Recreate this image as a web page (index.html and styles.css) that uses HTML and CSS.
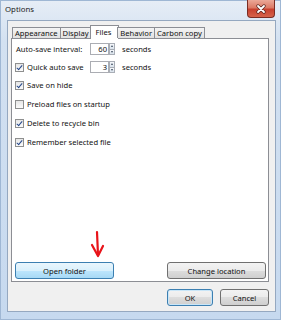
FILE: index.html
```html
<!DOCTYPE html>
<html lang="en">
<head>
  <meta charset="UTF-8" />
  <title>Options</title>
  <link rel="stylesheet" href="styles.css">
</head>
<body>

  <div class="window">
    <!-- Title bar -->
    <div class="titlebar">
      <span class="title">Options</span>
      <div class="close">
        <svg width="12" height="10" viewBox="0 0 12 10">
          <path d="M3 2 L9 8 M9 2 L3 8" stroke="#5a2620" stroke-width="3.2" stroke-linecap="round"/>
          <path d="M3 2 L9 8 M9 2 L3 8" stroke="#fff" stroke-width="1.8" stroke-linecap="round"/>
        </svg>
      </div>
    </div>

    <div class="client">
      <!-- Tabs -->
      <div class="tabs">
        <div class="tab">Appearance</div>
        <div class="tab">Display</div>
        <div class="tab active">Files</div>
        <div class="tab">Behavior</div>
        <div class="tab">Carbon copy</div>
      </div>

      <!-- Files page -->
      <div class="panel">
        <div class="options">
          <div class="row">
            <span class="field-label plain">Auto-save interval:</span>
            <span class="spin"><span class="spin-value">60</span><span class="spin-arrows"><i class="up"></i><i class="down"></i></span></span>
            <span class="unit">seconds</span>
          </div>
          <div class="row">
            <span class="field-label"><span class="check on"></span>Quick auto save</span>
            <span class="spin"><span class="spin-value">3</span><span class="spin-arrows"><i class="up"></i><i class="down"></i></span></span>
            <span class="unit">seconds</span>
          </div>
          <div class="row"><span class="check on"></span>Save on hide</div>
          <div class="row"><span class="check"></span>Preload files on startup</div>
          <div class="row"><span class="check on"></span>Delete to recycle bin</div>
          <div class="row"><span class="check on"></span>Remember selected file</div>
        </div>

        <div class="panel-buttons">
          <button class="btn hot">Open folder</button>
          <button class="btn">Change location</button>
        </div>

        <svg class="arrow" width="18" height="30" viewBox="0 0 18 30">
          <path d="M8 3 L9 26" stroke="#e8141a" stroke-width="2.2" stroke-linecap="round" fill="none"/>
          <path d="M3 16 L9 27 L14 17" stroke="#e8141a" stroke-width="2.2" stroke-linecap="round" stroke-linejoin="round" fill="none"/>
        </svg>
      </div>

      <div class="dialog-buttons">
        <button class="btn default">OK</button>
        <button class="btn">Cancel</button>
      </div>
    </div>
  </div>

</body>
</html>
```

FILE: styles.css
```css
* { box-sizing: border-box; }
body { margin: 0; font-family: "Noto Sans", "Liberation Sans", sans-serif; font-size: 7.6px; color: #111; }

.window { width: 281px; height: 320px; display: flex; flex-direction: column; padding: 0 4px 7px 0; background: linear-gradient(to bottom, #e6edf6 0, #d3e1f1 40px, #c6d9ef 100%); border: 1px solid #9fb7d4; }
.titlebar { height: 19px; display: flex; justify-content: space-between; align-items: flex-start; padding-left: 4px; }
.title { padding-top: 3px; font-size: 7.8px; color: #1b1b1b; }
.close { width: 28px; height: 18px; margin-top: -1px; margin-right: 1px; display: flex; align-items: center; justify-content: center; border: 1px solid #7a2c22; border-top: none; border-radius: 0 0 4px 4px; background: linear-gradient(#eba898 0, #dc7a66 45%, #c8402e 55%, #d6634a 100%); }

.client { flex: 1; margin-left: 6px; background: #f0f0f0; border: 1px solid #95a8c0; padding: 4px 6px 0 3px; display: flex; flex-direction: column; }

.tabs { height: 14px; display: flex; align-items: flex-end; margin: 0 0 -1px 1px; position: relative; z-index: 1; }
.tab { height: 11px; margin: 0 0 1px -1px; padding: 0 2px; line-height: 10px; border: 1px solid #8c8e94; border-bottom: none; background: linear-gradient(#f4f4f4, #e1e1e1); white-space: nowrap; }
.tab:first-child { margin-left: 0; }
.tab.active { height: 14px; margin: 0 -1px 0 -2px; padding: 1px 7px 0 5px; background: #fff; }

.panel { height: 244px; flex: none; position: relative; display: flex; flex-direction: column; padding: 4px 2px 2px 3px; background: #fff; border: 1px solid #8c8e94; }
.options { display: flex; flex-direction: column; gap: 6px; }
.row { height: 12px; display: flex; align-items: center; white-space: nowrap; }
.row:nth-child(n+4) { margin-top: 1px; }
.field-label { width: 75px; display: flex; align-items: center; }
.field-label.plain { padding-left: 1px; }
.check { width: 9px; height: 9px; margin-right: 3px; flex: none; border: 1px solid #8e8f8f; background: linear-gradient(#e6e6e6, #fbfbfb); position: relative; }
.check.on::after { content: ""; position: absolute; left: 2px; top: 0; width: 2px; height: 5px; border: solid #24478a; border-width: 0 1.4px 1.4px 0; transform: rotate(40deg); }

.spin { width: 25px; height: 12px; display: flex; }
.spin-value { flex: 1; border: 1px solid #abadb3; background: #fff; text-align: right; padding-right: 1px; line-height: 10px; }
.spin-arrows { width: 6px; display: flex; flex-direction: column; }
.spin-arrows i { flex: 1; display: flex; align-items: center; justify-content: center; border: 1px solid #a9aeb6; background: linear-gradient(#f6f8fb, #d9e2ec); }
.spin-arrows i + i { border-top: none; }
.spin-arrows i::after { content: ""; border-left: 1.5px solid transparent; border-right: 1.5px solid transparent; }
.spin-arrows .up::after { border-bottom: 2px solid #3b4a5c; }
.spin-arrows .down::after { border-top: 2px solid #3b4a5c; }
.unit { margin-left: 7px; }

.panel-buttons { margin-top: auto; display: flex; justify-content: space-between; }
.panel-buttons .btn { width: 99px; }
.btn { height: 17px; padding: 0; font: inherit; color: #111; border: 1px solid #707070; border-radius: 3px; background: linear-gradient(#f3f3f3 0, #ebebeb 50%, #dddddd 50%, #cfcfcf 100%); }
.btn.hot { border-color: #3c7fb1; background: linear-gradient(#eaf6fd 0, #d9f0fc 50%, #bee6fd 50%, #a7d9f5 100%); }
.btn.default { border-color: #3c7fb1; box-shadow: inset 0 0 0 1px #c9e6f8; }

.arrow { position: absolute; left: 77px; top: 190px; }

.dialog-buttons { display: flex; justify-content: flex-end; gap: 7px; margin-top: 7px; }
.dialog-buttons .btn { width: 46px; }
.dialog-buttons .btn + .btn { width: 49px; }
```
